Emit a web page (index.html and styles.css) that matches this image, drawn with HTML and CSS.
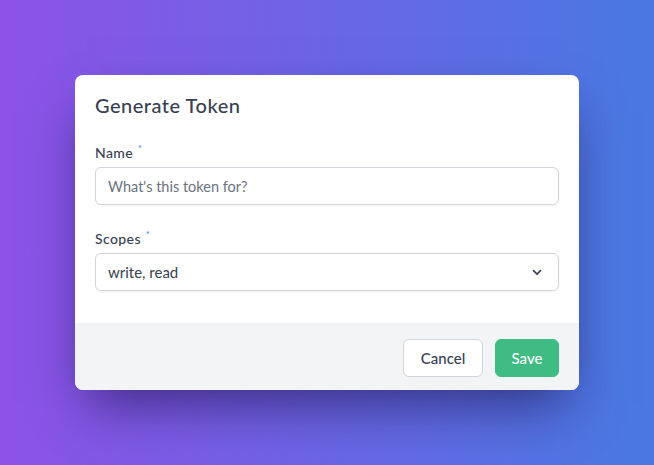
FILE: index.html
```html
<!DOCTYPE html>
<html lang="en">
<head>
<meta charset="utf-8">
<title>Generate Token</title>
<link rel="stylesheet" href="styles.css">
</head>
<body>
<div class="stage">
  <div class="modal">
    <div class="modal-body">
      <h1 class="title">Generate Token</h1>
      <div class="field">
        <label class="label" for="name">Name <span class="req">*</span></label>
        <input class="input" id="name" type="text" placeholder="What's this token for?">
      </div>
      <div class="field">
        <label class="label" for="scopes">Scopes <span class="req">*</span></label>
        <div class="select" id="scopes">
          <span class="select-value">write, read</span>
          <svg class="chevron" width="14" height="14" viewBox="0 0 20 20" fill="none" stroke="#374151" stroke-width="2.2" stroke-linecap="round" stroke-linejoin="round"><path d="M5 8l5 5 5-5"/></svg>
        </div>
      </div>
    </div>
    <div class="modal-footer">
      <button class="btn btn-secondary" type="button">Cancel</button>
      <button class="btn btn-primary" type="button">Save</button>
    </div>
  </div>
</div>
</body>
</html>
```

FILE: styles.css
```css
* { box-sizing: border-box; }
html, body { margin: 0; padding: 0; }
body {
  font-family: "Lato", "Open Sans", sans-serif;
  color: #374151;
}
.stage {
  width: 654px;
  height: 465px;
  background: linear-gradient(90deg, #8d52e7 0%, #4879e2 100%);
  display: flex;
  align-items: center;
  justify-content: center;
}
.modal {
  width: 504px;
  background: #fff;
  border-radius: 8px;
  overflow: hidden;
  box-shadow: 0 25px 50px -12px rgba(20, 10, 60, 0.6);
}
.modal-body {
  padding: 16px 20px 32px;
}
.title {
  margin: 0;
  font-size: 20px;
  line-height: 28px;
  font-weight: 500;
  letter-spacing: 0.5px;
  color: #374151;
}
.field { margin-top: 24px; }
.label {
  display: block;
  height: 20px;
  font-size: 14px;
  line-height: 20px;
  font-weight: 500;
  letter-spacing: 0.4px;
  color: #374151;
}
.req {
  color: #3b82f6;
  font-size: 9px;
  line-height: 0;
  vertical-align: 6px;
  margin-left: 1px;
}
.input, .select {
  display: block;
  margin-top: 4px;
  width: 100%;
  height: 38px;
  border: 1px solid #d1d5db;
  border-radius: 6px;
  background: #fff;
  padding: 0 12px;
  font-family: inherit;
  font-size: 15px;
  color: #374151;
  box-shadow: 0 1px 2px rgba(0,0,0,0.05);
}
.input::placeholder { color: #6b7280; font-size: 14.5px; }
.input:focus { outline: none; }
.select {
  display: flex;
  align-items: center;
  justify-content: space-between;
}
.chevron { margin-right: 2px; }
.modal-footer {
  background: #f3f4f6;
  padding: 16px 20px 13px;
  display: flex;
  justify-content: flex-end;
  gap: 12px;
}
.btn {
  height: 38px;
  border-radius: 6px;
  font-family: inherit;
  font-size: 15px;
  font-weight: 500;
  padding: 0;
  cursor: pointer;
}
.btn-secondary {
  background: #fff;
  border: 1px solid #d1d5db;
  color: #374151;
  width: 80px;
}
.btn-primary {
  background: #3fbc84;
  border: 1px solid #3fbc84;
  color: #fff;
  width: 64px;
}
```
